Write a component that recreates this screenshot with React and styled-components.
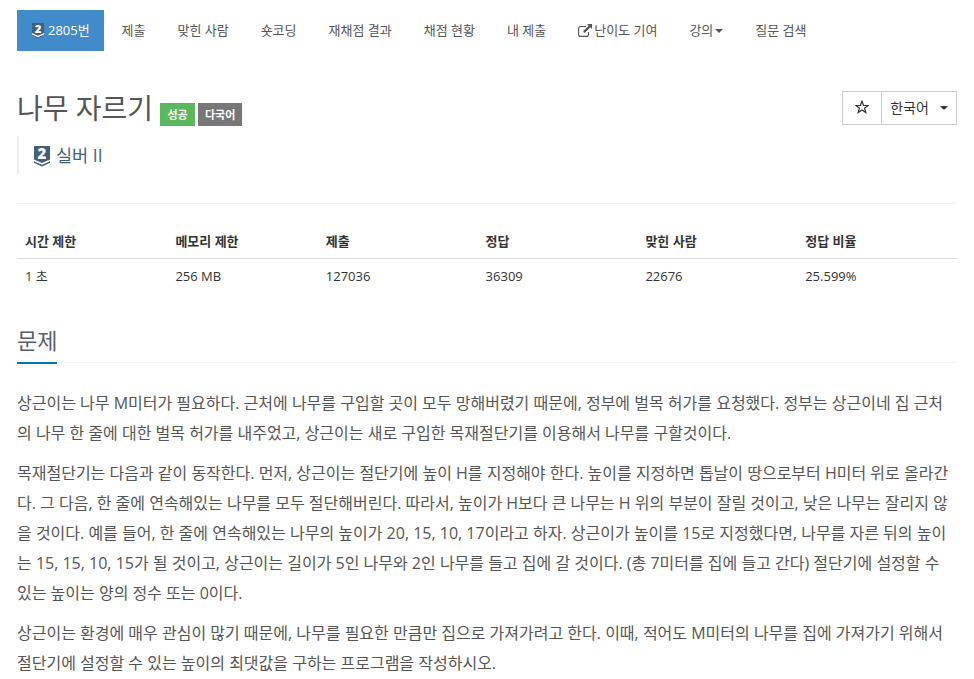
import React from 'react';
import styled, { createGlobalStyle, css } from 'styled-components';

const GlobalStyle = createGlobalStyle`
  * {
    box-sizing: border-box;
  }

  body {
    margin: 0;
    background-color: #fff;
    color: #333;
    font-family: 'Open Sans', 'Noto Sans CJK KR', sans-serif;
    font-size: 13px;
    line-height: 1.6;
  }
`;

const Container = styled.div`
  width: 974px;
  height: 679px;
  padding: 10px 17px 0;
  overflow: hidden;
`;

const Nav = styled.ul`
  display: flex;
  gap: 2px;
  height: 41px;
  margin: 0;
  padding: 0;
  list-style: none;
`;

const NavItem = styled.li`
  display: flex;
  align-items: center;
  padding: 0 15px 1px;
  color: #555;
  white-space: nowrap;

  ${({ $active }) => $active && css`
    width: 87px;
    margin-right: 0.5px;
    color: #fff;
    background-color: #428bca;
  `}
`;

const Caret = styled.span`
  width: 0;
  height: 0;
  margin-top: ${({ $top }) => $top || 0}px;
  margin-left: ${({ $gap }) => $gap || 2}px;
  border-top: 4px solid;
  border-right: 4px solid transparent;
  border-left: 4px solid transparent;
`;

const Header = styled.div`
  display: flex;
  justify-content: space-between;
  align-items: flex-start;
  height: 85px;
  padding-top: 40px;
`;

const TitleLine = styled.div`
  display: flex;
  align-items: flex-start;
`;

const Title = styled.h1`
  margin: 0 7px 0 0;
  color: #555;
  font-size: 28px;
  font-weight: 400;
  line-height: 35px;
  white-space: nowrap;
`;

const Label = styled.span`
  width: ${({ $width }) => $width}px;
  height: 23px;
  margin: 12px 3px 0 0;
  color: #fff;
  background-color: ${({ $color }) => $color};
  font-size: 11px;
  font-weight: 700;
  line-height: 23px;
  text-align: center;
`;

const ButtonGroup = styled.div`
  display: flex;
  height: 34px;
  border: 1px solid #ccc;
`;

const Button = styled.button`
  display: flex;
  align-items: center;
  justify-content: center;
  width: ${({ $width }) => $width}px;
  padding: 0 0 2px;
  border: 0;
  color: #333;
  background-color: #fff;
  font-family: inherit;
  font-size: 14px;

  & + & {
    border-left: 1px solid #ccc;
  }
`;

const Tier = styled.blockquote`
  display: flex;
  align-items: center;
  height: 38px;
  margin: 0 0 29px;
  padding-left: 15px;
  border-left: 2px solid #eee;
  color: #435f7a;
  font-size: 17.5px;
`;

const TierIcon = styled.svg`
  width: ${({ $size }) => $size}px;
  height: ${({ $size }) => $size * 1.28}px;
  margin: 2px ${({ $gap }) => $gap}px 0 0;
  overflow: visible;
`;

const Table = styled.table`
  width: 100%;
  margin-bottom: 31px;
  border-top: 1px solid #eee;
  border-spacing: 0;
  table-layout: fixed;
`;

const Th = styled.th`
  width: ${({ $width }) => $width};
  height: 55px;
  padding: 0 8px 7px;
  border-bottom: 1px solid #ddd;
  line-height: 19px;
  text-align: left;
  vertical-align: bottom;
`;

const Td = styled.td`
  padding: 8px;
  line-height: 19px;
`;

const Headline = styled.div`
  height: 38px;
  margin-bottom: 25px;
  border-bottom: 1px dotted #e4e9f0;
`;

const HeadlineText = styled.h2`
  display: inline-block;
  height: 39px;
  margin: 0;
  border-bottom: 2px solid #0076bd;
  color: #585f69;
  font-size: 22px;
  font-weight: 400;
  line-height: 31px;
`;

const Paragraph = styled.p`
  margin: 0 0 10px;
  color: #555;
  font-size: 16px;
  line-height: 30px;
  white-space: nowrap;
`;

const Line = styled.span`
  display: block;
`;

const columns = [
  { name: '시간 제한', value: '1 초', width: '16%' },
  { name: '메모리 제한', value: '256 MB', width: '16%' },
  { name: '제출', value: '127036', width: '17%' },
  { name: '정답', value: '36309', width: '17%' },
  { name: '맞힌 사람', value: '22676', width: '17%' },
  { name: '정답 비율', value: '25.599%', width: '17%' },
];

const paragraphs = [
  [
    '상근이는 나무 M미터가 필요하다. 근처에 나무를 구입할 곳이 모두 망해버렸기 때문에, 정부에 벌목 허가를 요청했다. 정부는 상근이네 집 근처',
    '의 나무 한 줄에 대한 벌목 허가를 내주었고, 상근이는 새로 구입한 목재절단기를 이용해서 나무를 구할것이다.',
  ],
  [
    '목재절단기는 다음과 같이 동작한다. 먼저, 상근이는 절단기에 높이 H를 지정해야 한다. 높이를 지정하면 톱날이 땅으로부터 H미터 위로 올라간',
    '다. 그 다음, 한 줄에 연속해있는 나무를 모두 절단해버린다. 따라서, 높이가 H보다 큰 나무는 H 위의 부분이 잘릴 것이고, 낮은 나무는 잘리지 않',
    '을 것이다. 예를 들어, 한 줄에 연속해있는 나무의 높이가 20, 15, 10, 17이라고 하자. 상근이가 높이를 15로 지정했다면, 나무를 자른 뒤의 높이',
    '는 15, 15, 10, 15가 될 것이고, 상근이는 길이가 5인 나무와 2인 나무를 들고 집에 갈 것이다. (총 7미터를 집에 들고 간다) 절단기에 설정할 수',
    '있는 높이는 양의 정수 또는 0이다.',
  ],
  [
    '상근이는 환경에 매우 관심이 많기 때문에, 나무를 필요한 만큼만 집으로 가져가려고 한다. 이때, 적어도 M미터의 나무를 집에 가져가기 위해서',
    '절단기에 설정할 수 있는 높이의 최댓값을 구하는 프로그램을 작성하시오.',
  ],
];

const SilverIcon = ({ size, gap }) => (
  <TierIcon $size={size} $gap={gap} viewBox="0 0 100 128">
    <path fill="#fff" d="M0 80h100v22l-50 22L0 102z" />
    <path fill="#435f7a" d="M0 0h100v84L50 107 0 84z" />
    <path fill="#435f7a" d="M0 96l50 22 50-22v9l-50 23L0 105z" />
    <text
      x="50"
      y="84"
      fill="#fff"
      fontFamily="Open Sans"
      fontSize="94"
      fontWeight="800"
      textAnchor="middle"
    >
      2
    </text>
  </TierIcon>
);

const StarIcon = () => (
  <svg width="14" height="14" viewBox="0 0 14 14" fill="none" stroke="#333" strokeWidth="1.2">
    <path d="M7 1.2l1.6 4.1 4.5.2-3.5 2.7 1.2 4.3L7 10l-3.8 2.5 1.200-4.300L.9 5.500l4.500-.2z" />
  </svg>
);

const LinkIcon = styled.svg`
  width: 14px;
  height: 13px;
  margin-right: 2px;
`;

const App = () => (
  <>
    <GlobalStyle />
    <Container>
      <Nav>
        <NavItem $active>
          <SilverIcon size={12} gap={4} />
          2805번
        </NavItem>
        <NavItem>제출</NavItem>
        <NavItem>맞힌 사람</NavItem>
        <NavItem>숏코딩</NavItem>
        <NavItem>재채점 결과</NavItem>
        <NavItem>채점 현황</NavItem>
        <NavItem>내 제출</NavItem>
        <NavItem>
          <LinkIcon viewBox="0 0 14 13">
            <path
              fill="none"
              stroke="#555"
              strokeWidth="1.1"
              d="M8 2.500H2.600a2 2 0 0 0-2 2v5.900a2 2 0 0 0 2 2h5.900a2 2 0 0 0 2-2V8"
            />
            <path fill="#555" d="M9 0h5v5l-1.700-1.700L6.700 8.900 5.100 7.300l5.600-5.600z" />
          </LinkIcon>
          난이도 기여
        </NavItem>
        <NavItem>
          강의
          <Caret $top={2} />
        </NavItem>
        <NavItem>질문 검색</NavItem>
      </Nav>
      <Header>
        <TitleLine>
          <Title>나무 자르기</Title>
          <Label $color="#5cb85c" $width={35}>성공</Label>
          <Label $color="#777" $width={44}>다국어</Label>
        </TitleLine>
        <ButtonGroup>
          <Button $width={38}>
            <StarIcon />
          </Button>
          <Button $width={75}>
            한국어
            <Caret $gap={11} $top={2} />
          </Button>
        </ButtonGroup>
      </Header>
      <Tier>
        <SilverIcon size={16} gap={6} />
        실버 II
      </Tier>
      <Table>
        <thead>
          <tr>
            {columns.map(({ name, width }) => (
              <Th key={name} $width={width}>{name}</Th>
            ))}
          </tr>
        </thead>
        <tbody>
          <tr>
            {columns.map(({ name, value }) => (
              <Td key={name}>{value}</Td>
            ))}
          </tr>
        </tbody>
      </Table>
      <Headline>
        <HeadlineText>문제</HeadlineText>
      </Headline>
      {paragraphs.map((lines) => (
        <Paragraph key={lines[0]}>
          {lines.map((line) => (
            <Line key={line}>{line}</Line>
          ))}
        </Paragraph>
      ))}
    </Container>
  </>
);

export default App;
